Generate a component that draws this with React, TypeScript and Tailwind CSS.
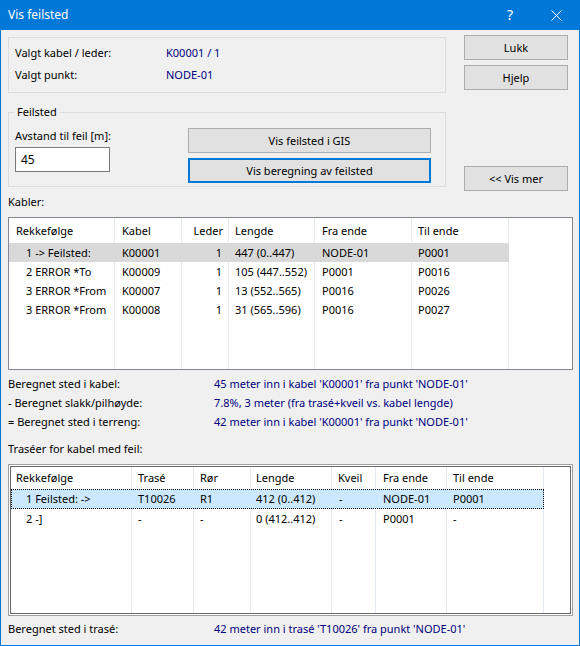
import React from "react";

const VAL = "text-[#000080]";

function Btn({
  children,
  className = "",
  focused = false,
}: {
  children: React.ReactNode;
  className?: string;
  focused?: boolean;
}) {
  return (
    <div
      className={`flex items-center justify-center bg-[#e1e1e1] text-black ${
        focused ? "border-2 border-[#0078d7]" : "border border-[#adadad]"
      } ${className}`}
    >
      {children}
    </div>
  );
}

type Col = { w: string; h: string; hp: string; cp: string; right?: boolean };

const t1Cols: Col[] = [
  { w: "w-[106px]", h: "Rekkefølge", hp: "pl-[7px]", cp: "pl-[17px]" },
  { w: "w-[67px]", h: "Kabel", hp: "pl-[7px]", cp: "pl-[7px]" },
  { w: "w-[47px]", h: "Leder", hp: "pr-[5px]", cp: "pr-[6px]", right: true },
  { w: "w-[86px]", h: "Lengde", hp: "pl-[6px]", cp: "pl-[6px]" },
  { w: "w-[97px]", h: "Fra ende", hp: "pl-[7px]", cp: "pl-[7px]" },
  { w: "w-[97px]", h: "Til ende", hp: "pl-[6px]", cp: "pl-[6px]" },
];

const t1Rows = [
  ["1 -> Feilsted:", "K00001", "1", "447 (0..447)", "NODE-01", "P0001"],
  ["2 ERROR *To", "K00009", "1", "105 (447..552)", "P0001", "P0016"],
  ["3 ERROR *From", "K00007", "1", "13 (552..565)", "P0016", "P0026"],
  ["3 ERROR *From", "K00008", "1", "31 (565..596)", "P0016", "P0027"],
];

const t2Cols: Col[] = [
  { w: "w-[121px]", h: "Rekkefølge", hp: "pl-[5px]", cp: "pl-[15px]" },
  { w: "w-[62px]", h: "Trasé", hp: "pl-[6px]", cp: "pl-[6px]" },
  { w: "w-[57px]", h: "Rør", hp: "pl-[6px]", cp: "pl-[6px]" },
  { w: "w-[81px]", h: "Lengde", hp: "pl-[5px]", cp: "pl-[5px]" },
  { w: "w-[44px]", h: "Kveil", hp: "pl-[6px]", cp: "pl-[7px]" },
  { w: "w-[71px]", h: "Fra ende", hp: "pl-[7px]", cp: "pl-[7px]" },
  { w: "w-[97px]", h: "Til ende", hp: "pl-[6px]", cp: "pl-[6px]" },
];

const t2Rows = [
  ["1 Feilsted: ->", "T10026", "R1", "412 (0..412)", "-", "NODE-01", "P0001"],
  ["2 -]", "-", "-", "0 (412..412)", "-", "P0001", "-"],
];

function Cells({
  cols,
  values,
  header,
  selected,
}: {
  cols: Col[];
  values?: string[];
  header?: boolean;
  selected?: boolean;
}) {
  return (
    <>
      {cols.map((c, i) => (
        <div
          key={i}
          className={`${c.w} h-full shrink-0 border-r ${
            selected ? "border-transparent" : "border-[#e3eaf3]"
          } flex items-center whitespace-nowrap ${
            c.right ? "justify-end" : ""
          } ${header ? c.hp : c.cp}`}
        >
          {values ? values[i] : header ? c.h : ""}
        </div>
      ))}
    </>
  );
}

function Table1() {
  return (
    <div className="mt-[7px] h-[153px] border border-[#828790] bg-white flex flex-col overflow-hidden">
      <div className="flex h-[25px] shrink-0">
        <Cells cols={t1Cols} header />
      </div>
      {t1Rows.map((r, i) => (
        <div key={i} className="flex h-[19px] shrink-0">
          <div className={`flex h-full ${i === 0 ? "bg-[#d9d9d9]" : ""}`}>
            <Cells cols={t1Cols} values={r} selected={i === 0} />
          </div>
        </div>
      ))}
      <div className="flex flex-1">
        <Cells cols={t1Cols} />
      </div>
    </div>
  );
}

function Table2() {
  return (
    <div className="mt-[7px] h-[152px] border border-[#a0a0a0] bg-white p-px">
      <div className="h-full border border-[#696969] flex flex-col overflow-hidden">
        <div className="flex h-[22px] shrink-0">
          <Cells cols={t2Cols} header />
        </div>
        {t2Rows.map((r, i) => (
          <div key={i} className="flex h-[20px] shrink-0">
            <div
              className={`flex h-full ${
                i === 0
                  ? "bg-[#cce8ff] outline-1 outline-dotted outline-black -outline-offset-1"
                  : ""
              }`}
            >
              <Cells cols={t2Cols} values={r} selected={i === 0} />
            </div>
          </div>
        ))}
        <div className="flex flex-1">
          <Cells cols={t2Cols} />
        </div>
      </div>
    </div>
  );
}

export default function App() {
  return (
    <div className="w-[580px] h-[646px] flex flex-col bg-[#0078d7] px-px pb-px font-['Noto_Sans',sans-serif] text-[11px] leading-[16px] text-black overflow-hidden">
      {/* Title bar */}
      <div className="h-[30px] shrink-0 flex items-center text-white">
        <div className="pl-[7px] flex-1 text-[12px]">Vis feilsted</div>
        <div className="w-[46px] h-full flex items-center justify-center text-[14px]">
          ?
        </div>
        <div className="w-[46px] h-full flex items-center justify-center">
          <svg width="11" height="11" viewBox="0 0 11 11">
            <path d="M0.5 0.5L10.5 10.5M10.5 0.5L0.5 10.5" stroke="white" strokeWidth="1" />
          </svg>
        </div>
      </div>

      {/* Body */}
      <div className="flex-1 bg-[#f0f0f0] pl-[7px] pr-[6px] flex flex-col">
        <div className="flex">
          {/* left column */}
          <div className="w-[438px] flex flex-col">
            <div className="mt-[7px] h-[56px] border border-[#dcdcdc] pl-[6px] pt-[7px] flex flex-col gap-[6px]">
              <div className="grid grid-cols-[151px_1fr]">
                <span>Valgt kabel / leder:</span>
                <span className={VAL}>K00001 / 1</span>
              </div>
              <div className="grid grid-cols-[151px_1fr]">
                <span>Valgt punkt:</span>
                <span className={VAL}>NODE-01</span>
              </div>
            </div>

            <div className="relative mt-[19px] h-[75px] border border-[#dcdcdc] flex">
              <span className="absolute -top-[9px] left-[5px] px-[3px] bg-[#f0f0f0]">
                Feilsted
              </span>
              <div className="w-[179px] pl-[6px] pt-[15px] flex flex-col">
                <span>Avstand til feil [m]:</span>
                <div className="mt-[3px] w-[95px] h-[25px] border border-[#7a7a7a] bg-white flex items-center pl-[5px] text-[12px]">
                  45
                </div>
              </div>
              <div className="pt-[15px] flex flex-col">
                <Btn className="w-[243px] h-[25px]">Vis feilsted i GIS</Btn>
                <Btn className="mt-[5px] w-[243px] h-[25px]" focused>
                  Vis beregning av feilsted
                </Btn>
              </div>
            </div>
          </div>

          {/* right column */}
          <div className="ml-[18px] w-[104px] flex flex-col">
            <Btn className="mt-[5px] h-[25px]">Lukk</Btn>
            <Btn className="mt-[5px] h-[25px]">Hjelp</Btn>
            <Btn className="mt-[76px] h-[25px]">&lt;&lt; Vis mer</Btn>
          </div>
        </div>

        <div className="mt-[3px]">Kabler:</div>
        <Table1 />

        <div className="mt-[4px] flex flex-col leading-[19px]">
          <div className="grid grid-cols-[206px_1fr]">
            <span>Beregnet sted i kabel:</span>
            <span className={VAL}>45 meter inn i kabel 'K00001' fra punkt 'NODE-01'</span>
          </div>
          <div className="grid grid-cols-[206px_1fr]">
            <span>- Beregnet slakk/pilhøyde:</span>
            <span className={VAL}>7.8%, 3 meter (fra trasé+kveil vs. kabel lengde)</span>
          </div>
          <div className="grid grid-cols-[206px_1fr]">
            <span>= Beregnet sted i terreng:</span>
            <span className={VAL}>42 meter inn i kabel 'K00001' fra punkt 'NODE-01'</span>
          </div>
        </div>

        <div className="mt-[10px]">Traséer for kabel med feil:</div>
        <Table2 />

        <div className="mt-[5px] grid grid-cols-[206px_1fr]">
          <span>Beregnet sted i trasé:</span>
          <span className={VAL}>42 meter inn i trasé 'T10026' fra punkt 'NODE-01'</span>
        </div>
      </div>
    </div>
  );
}
